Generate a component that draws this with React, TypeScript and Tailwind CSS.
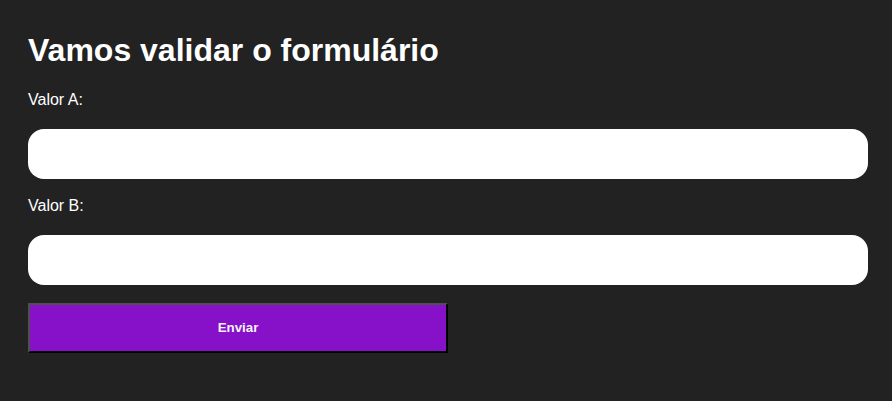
const App = () => {
  return (
    <div className="min-h-[401px] w-full bg-[#222222] px-[28px] pt-[32px] font-['Liberation_Sans',Arial,sans-serif] text-white">
      <form className="flex flex-col" onSubmit={(e) => e.preventDefault()}>
        {/* Title */}
        <h1 className="mb-[21.5px] text-[32px] font-bold leading-[37px]">Vamos validar o formulário</h1>

        {/* Campo A */}
        <label htmlFor="valorA" className="mb-[20px] block text-[16px] leading-[18.4px]">
          Valor A:
        </label>
        <input id="valorA" type="text" className="mb-[18px] h-[50px] w-[840px] rounded-[16px] border-0 bg-white px-4 text-black outline-none" />

        {/* Campo B */}
        <label htmlFor="valorB" className="mb-[20px] block text-[16px] leading-[18.4px]">
          Valor B:
        </label>
        <input id="valorB" type="text" className="mb-[18px] h-[50px] w-[840px] rounded-[16px] border-0 bg-white px-4 text-black outline-none" />

        {/* Submit */}
        <button
          type="submit"
          className="h-[50px] w-[420px] border-2 border-t-[#4f4f4f] border-l-[#4f4f4f] border-b-black border-r-black bg-[#8710c9] text-[13.33px] font-bold text-[#f4f4f4]"
        >
          Enviar
        </button>
      </form>
    </div>
  );
};

export default App;
